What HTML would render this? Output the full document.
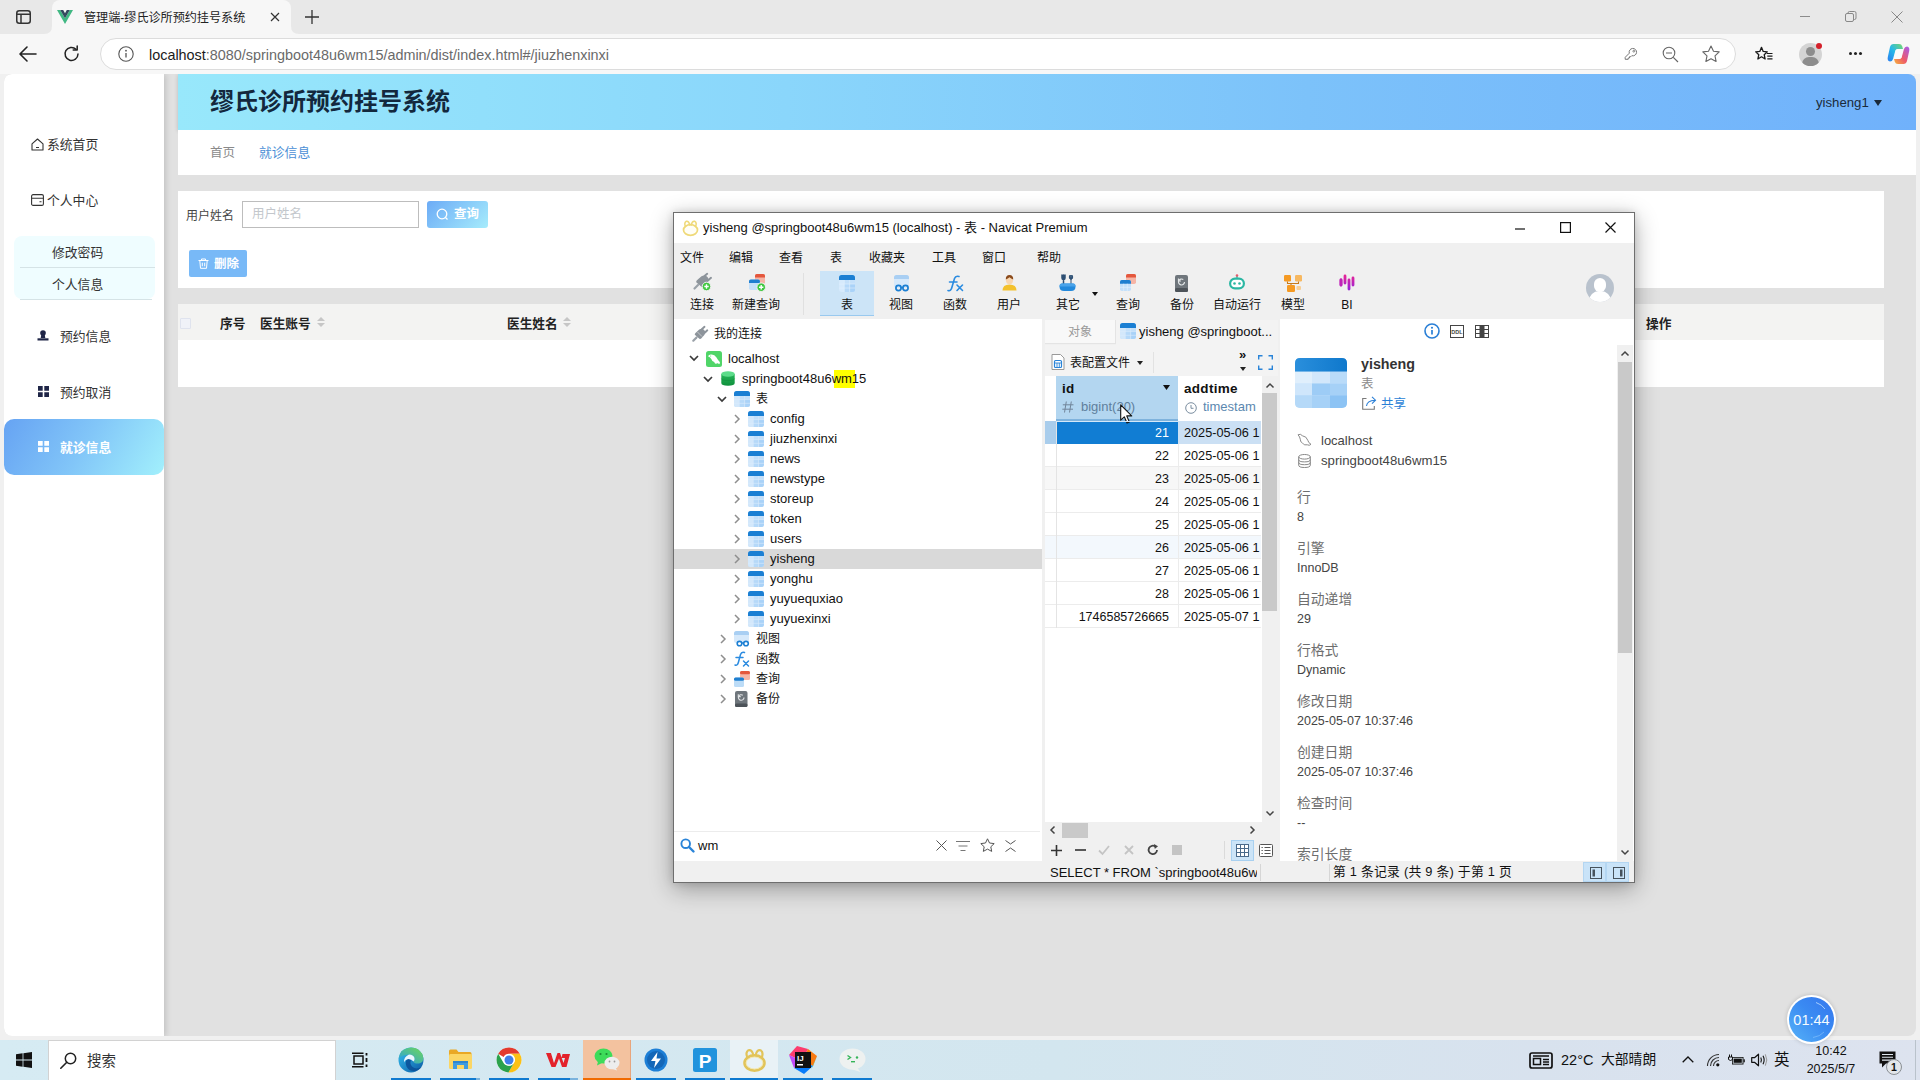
<!DOCTYPE html>
<html lang="zh-CN">
<head>
<meta charset="utf-8">
<title>管理端-缪氏诊所预约挂号系统</title>
<style>
*{box-sizing:border-box;margin:0;padding:0}
html,body{width:1920px;height:1080px;overflow:hidden;background:#f0f0f0;font-family:"Liberation Sans","Noto Sans CJK SC",sans-serif;color:#222}
.abs{position:absolute}
#root{position:relative;width:1920px;height:1080px;overflow:hidden}
svg{display:block;overflow:visible}
.t{position:absolute;white-space:nowrap;line-height:1}
/* ---------- browser chrome ---------- */
#tabbar{left:0;top:0;width:1920px;height:34px;background:#e8e8e8}
#tab{left:52px;top:0;width:239px;height:34px;background:#f7f7f7;border-radius:8px 8px 0 0}
#addr{left:0;top:34px;width:1920px;height:40px;background:#f7f7f7}
#pill{left:100px;top:38px;width:1636px;height:32px;background:#fff;border-radius:16px;border:1px solid #dcdcdc}
/* ---------- page ---------- */
#page{left:4px;top:74px;width:1912px;height:962px;background:#e1e1e1;border-radius:8px;overflow:hidden}
#side{left:0;top:0;width:160px;height:963px;background:#fff;box-shadow:2px 0 6px rgba(0,0,0,.14)}
.mi{font-size:12.8px;color:#333}
#hdr{left:174px;top:0;width:1738px;height:56px;background:linear-gradient(90deg,#98e8fb 0%,#8ad6fb 35%,#7cc2fa 65%,#70b1fb 100%);box-shadow:0 1px 4px rgba(0,0,0,.18)}
#crumb{left:174px;top:56px;width:1738px;height:45px;background:#fff}
#sp{left:174px;top:117px;width:1706px;height:97px;background:#fff}
#tbl{left:174px;top:230px;width:1706px;height:83px;background:#fff}
#th{left:0;top:0;width:1706px;height:36px;background:#f3f3f2}
.th{font-size:12.700px;font-weight:bold;color:#222}
/* ---------- taskbar ---------- */
#task{left:0;top:1040px;width:1920px;height:40px;background:linear-gradient(90deg,#d6ebf3 0%,#d3e6ef 55%,#d8e2ee 80%,#dde3ef 100%)}
.bar{position:absolute;top:38px;height:2px;background:#0f7ad0}
</style>
</head>
<body>
<div id="root">

<!-- ================= BROWSER CHROME ================= -->
<div id="tabbar" class="abs">
  <div id="tab" class="abs"></div>
  <svg class="abs" style="left:44px;top:26px" width="8" height="8" viewBox="0 0 8 8"><path d="M0 8H8V0Q8 8 0 8Z" fill="#f7f7f7"/></svg><svg class="abs" style="left:291px;top:26px" width="8" height="8" viewBox="0 0 8 8"><path d="M8 8H0V0Q0 8 8 8Z" fill="#f7f7f7"/></svg>
  <svg class="abs" style="left:16px;top:10px" width="15" height="14" viewBox="0 0 15 14"><rect x="0.75" y="0.75" width="13.5" height="12.5" rx="2.5" fill="none" stroke="#333" stroke-width="1.5"/><path d="M1 4.200H14M5 4.200V13" stroke="#333" stroke-width="1.500" fill="none"/></svg>
  <svg class="abs" style="left:57px;top:10px" width="16" height="14" viewBox="0 0 16 14"><path d="M0 0H3.2L8 8.3 12.8 0H16L8 14Z" fill="#41b883"/><path d="M3.2 0H6.2L8 3.2 9.8 0H12.8L8 8.3Z" fill="#35495e"/></svg>
  <div class="t" style="left:84px;top:12px;font-size:12.100px;color:#222">管理端-缪氏诊所预约挂号系统</div>
  <svg class="abs" style="left:270px;top:12px" width="10" height="10" viewBox="0 0 10 10"><path d="M1 1L9 9M9 1L1 9" stroke="#333" stroke-width="1.2"/></svg>
  <svg class="abs" style="left:305px;top:10px" width="14" height="14" viewBox="0 0 14 14"><path d="M7 0V14M0 7H14" stroke="#333" stroke-width="1.3"/></svg>
  <svg class="abs" style="left:1800px;top:16px" width="10" height="1" viewBox="0 0 10 1"><path d="M0 .5H10" stroke="#8c8c8c" stroke-width="1"/></svg>
  <svg class="abs" style="left:1845px;top:11px" width="12" height="12" viewBox="0 0 12 12"><rect x="0.5" y="2.5" width="8" height="8" rx="1.5" fill="none" stroke="#888"/><path d="M3 2.5V2Q3 .5 4.5 .5H9.5Q11 .5 11 2V7Q11 8.5 9.5 8.5H9" fill="none" stroke="#888"/></svg>
  <svg class="abs" style="left:1891px;top:11px" width="12" height="12" viewBox="0 0 12 12"><path d="M.5 .5L11.5 11.5M11.5 .5L.5 11.5" stroke="#888" stroke-width="1"/></svg>
</div>
<div id="addr" class="abs"></div>
<div id="pill" class="abs"></div>
<svg class="abs" style="left:19px;top:46px" width="18" height="16" viewBox="0 0 18 16"><path d="M17 8H1.5M8 1L1 8 8 15" fill="none" stroke="#222" stroke-width="1.6" stroke-linecap="round" stroke-linejoin="round"/></svg>
<svg class="abs" style="left:63px;top:45px" width="17" height="17" viewBox="0 0 17 17"><path d="M15 9A6.500 6.500 0 1 1 13 4.200" fill="none" stroke="#222" stroke-width="1.500" stroke-linecap="round"/><path d="M14.200 1V5H10.200" fill="none" stroke="#222" stroke-width="1.5" stroke-linecap="round" stroke-linejoin="round"/></svg>
<svg class="abs" style="left:118px;top:46px" width="16" height="16" viewBox="0 0 16 16"><circle cx="8" cy="8" r="7.2" fill="none" stroke="#555" stroke-width="1.1"/><path d="M8 7V11.5" stroke="#555" stroke-width="1.3"/><circle cx="8" cy="4.7" r=".9" fill="#555"/></svg>
<div class="t" style="left:149px;top:48px;font-size:14.400px;color:#1a1a1a;letter-spacing:0">localhost<span style="color:#6a6a6a">:8080/springboot48u6wm15/admin/dist/index.html#/jiuzhenxinxi</span></div>
<!-- right side address icons -->
<svg class="abs" style="left:1623px;top:46px" width="16" height="16" viewBox="0 0 16 16"><path d="M6.300 7.200A3.700 3.700 0 1 1 8.800 9.700L7.800 10.700H6.500V12H5.200V13.300H2.200V11.300Z" fill="none" stroke="#777" stroke-width="1" stroke-linejoin="round"/><circle cx="10.800" cy="5.200" r=".9" fill="none" stroke="#777" stroke-width=".9"/></svg>
<svg class="abs" style="left:1662px;top:46px" width="17" height="17" viewBox="0 0 17 17"><circle cx="7" cy="7" r="5.8" fill="none" stroke="#666" stroke-width="1.1"/><path d="M4 7H10M11.3 11.3L16 16" stroke="#666" stroke-width="1.2"/></svg>
<svg class="abs" style="left:1702px;top:45px" width="18" height="17" viewBox="0 0 18 17"><path d="M9 1L11.5 6.2 17.2 6.9 13 10.8 14.1 16.4 9 13.7 3.9 16.4 5 10.8.8 6.900 6.500 6.200Z" fill="none" stroke="#666" stroke-width="1.1" stroke-linejoin="round"/></svg>
<svg class="abs" style="left:1755px;top:46px" width="19" height="18" viewBox="0 0 19 18"><path d="M6.500 1.300L8.200 5.400 12.300 5.800 9.200 8.700 10.100 13 6.500 10.800 2.900 13 3.800 8.700.7 5.800 4.800 5.400Z" fill="none" stroke="#1a1a1a" stroke-width="1.300" stroke-linejoin="round"/><path d="M11.800 7.500H17.500M12.300 10.200H17.500M12.300 12.900H17.500" stroke="#1a1a1a" stroke-width="1.200"/></svg>
<div class="abs" style="left:1799px;top:43px;width:23px;height:23px;border-radius:12px;background:#d4d4d4;overflow:hidden"><div class="abs" style="left:7px;top:4px;width:9px;height:9px;border-radius:5px;background:#8d8d8d"></div><div class="abs" style="left:3px;top:14px;width:17px;height:14px;border-radius:8px;background:#8d8d8d"></div></div>
<div class="abs" style="left:1816px;top:43px;width:6px;height:6px;border-radius:3px;background:#d4202a"></div>
<div class="abs" style="left:1849px;top:52px;width:3px;height:3px;border-radius:2px;background:#222;box-shadow:5px 0 0 #222,10px 0 0 #222"></div>
<svg class="abs" style="left:1887px;top:43px" width="23" height="22" viewBox="0 0 23 22"><defs><linearGradient id="cp1" x1="0" y1="1" x2="1" y2="0"><stop offset="0" stop-color="#2a7df0"/><stop offset=".5" stop-color="#27b9e8"/><stop offset="1" stop-color="#7ad86a"/></linearGradient><linearGradient id="cp2" x1="0" y1="1" x2="1" y2="0"><stop offset="0" stop-color="#f5b63a"/><stop offset=".45" stop-color="#ee5a6a"/><stop offset="1" stop-color="#a45cf0"/></linearGradient><linearGradient id="cp3" x1="0" y1="0" x2="1" y2="1"><stop offset="0" stop-color="#e8d44a"/><stop offset="1" stop-color="#f08a3a"/></linearGradient></defs><path d="M6.500 1H12Q14.500 1 15.200 3.300L16 6H10.500Q8.800 6 8.300 7.800L6 16Q5.300 18.500 3 18.500 0 18 .8 14L3 4Q3.800 1 6.500 1Z" fill="url(#cp1)"/><path d="M16.500 21H11Q8.500 21 7.800 18.700L7 16H12.500Q14.200 16 14.700 14.200L17 6Q17.700 3.500 20 3.500 23 4 22.200 8L20 18Q19.200 21 16.500 21Z" fill="url(#cp2)"/><path d="M10.500 6H16L14.700 14.200Q14.200 16 12.500 16H7L8.300 7.800Q8.800 6 10.500 6Z" fill="#fff" opacity=".55"/></svg>

<!-- ================= PAGE ================= -->
<div id="page" class="abs">
  <div id="hdr" class="abs">
    <div class="t" style="left:32px;top:16px;font-size:24px;font-weight:bold;color:#13283d">缪氏诊所预约挂号系统</div>
    <div class="t" style="left:1638px;top:22px;font-size:13.2px;color:#1a2a3a">yisheng1</div>
    <svg class="abs" style="left:1696px;top:26px" width="8" height="6" viewBox="0 0 8 6"><path d="M0 0H8L4 6Z" fill="#1a2a3a"/></svg>
  </div>
  <div id="crumb" class="abs">
    <div class="t" style="left:32px;top:17px;font-size:12.5px;color:#8a8a8a">首页</div>
    <div class="t" style="left:81px;top:17px;font-size:12.800px;color:#4b8fd6">就诊信息</div>
  </div>
  <div id="sp" class="abs">
    <div class="t" style="left:8px;top:19px;font-size:12px;color:#454545">用户姓名</div>
    <div class="abs" style="left:64px;top:10px;width:177px;height:27px;border:1px solid #bdbdbd;background:#fff"></div>
    <div class="t" style="left:74px;top:17px;font-size:12.500px;color:#c3c7cc">用户姓名</div>
    <div class="abs" style="left:249px;top:10px;width:61px;height:27px;border-radius:3px;background:linear-gradient(135deg,#6cabf6,#a6ecfc)"></div>
    <svg class="abs" style="left:258px;top:17px" width="13" height="13" viewBox="0 0 13 13"><circle cx="6" cy="6" r="4.800" fill="none" stroke="#fff" stroke-width="1.300"/><path d="M9.500 9.500L11.500 11.500" stroke="#fff" stroke-width="1.300"/></svg>
    <div class="t" style="left:276px;top:17px;font-size:12.500px;font-weight:bold;color:#fff">查询</div>
    <div class="abs" style="left:11px;top:59px;width:58px;height:27px;border-radius:2px;background:#78b9f7"></div>
    <svg class="abs" style="left:20px;top:67px" width="11" height="11" viewBox="0 0 11 11"><path d="M.5 2.500H10.500M3.500 2.500V1H7.500V2.500M1.800 2.500L2.500 10.300H8.500L9.200 2.500M4.300 4.700V8.300M6.700 4.700V8.300" fill="none" stroke="#fff" stroke-width="1"/></svg>
    <div class="t" style="left:36px;top:67px;font-size:12.500px;font-weight:bold;color:#fff">删除</div>
  </div>
  <div id="tbl" class="abs">
    <div id="th" class="abs"></div>
    <div class="abs" style="left:2px;top:14px;width:11px;height:11px;border:1px solid #dfe3ee;background:#f0f2f8;border-radius:1px"></div>
    <div class="t th" style="left:42px;top:14px">序号</div>
    <div class="t th" style="left:82px;top:14px">医生账号</div>
    <svg class="abs" style="left:139px;top:13px" width="8" height="10" viewBox="0 0 8 10"><path d="M0 4L4 0 8 4Z" fill="#c6c6c6"/><path d="M0 6L4 10 8 6Z" fill="#c6c6c6"/></svg>
    <div class="t th" style="left:329px;top:14px">医生姓名</div>
    <svg class="abs" style="left:385px;top:13px" width="8" height="10" viewBox="0 0 8 10"><path d="M0 4L4 0 8 4Z" fill="#c6c6c6"/><path d="M0 6L4 10 8 6Z" fill="#c6c6c6"/></svg>
    <div class="t th" style="left:1468px;top:14px">操作</div>
  </div>
  <!-- sidebar -->
  <div id="side" class="abs">
    <svg class="abs" style="left:27px;top:64px" width="13" height="13" viewBox="0 0 13 13"><path d="M1 5.800L6.500 1 12 5.800V12H1Z" fill="none" stroke="#333" stroke-width="1.100" stroke-linejoin="round"/><path d="M5 9.500H8" stroke="#333" stroke-width="1.100"/></svg>
    <div class="t mi" style="left:43px;top:65px">系统首页</div>
    <svg class="abs" style="left:27px;top:120px" width="13" height="12" viewBox="0 0 13 12"><rect x=".6" y=".6" width="11.800" height="10.800" rx="1.500" fill="none" stroke="#333" stroke-width="1.100"/><path d="M.6 4.200H12.400M8.500 7.800H10.500" stroke="#333" stroke-width="1.100"/></svg>
    <div class="t mi" style="left:43px;top:121px">个人中心</div>
    <div class="abs" style="left:10px;top:162px;width:141px;height:63px;background:#effdff;border-radius:8px"></div>
    <div class="abs" style="left:16px;top:193px;width:135px;height:1px;background:#d5e3e6"></div>
    <div class="abs" style="left:16px;top:225px;width:132px;height:1px;background:#d5e3e6"></div>
    <div class="t mi" style="left:48px;top:173px">修改密码</div>
    <div class="t mi" style="left:48px;top:205px">个人信息</div>
    <svg class="abs" style="left:33px;top:256px" width="12" height="11" viewBox="0 0 12 11"><circle cx="6" cy="3" r="2.800" fill="#1f2547"/><path d="M4.300 4.500H7.700L8.300 8H3.700Z" fill="#1f2547"/><rect x=".5" y="8.300" width="11" height="2.200" fill="#1f2547"/></svg>
    <div class="t mi" style="left:56px;top:257px">预约信息</div>
    <svg class="abs" style="left:34px;top:312px" width="11" height="11" viewBox="0 0 11 11"><path d="M0 0H4.700V4.700H0ZM6.300 0H11V4.700H6.300ZM0 6.300H4.700V11H0ZM6.300 6.300H11V11H6.300Z" fill="#1f2547"/></svg>
    <div class="t mi" style="left:56px;top:313px">预约取消</div>
    <div class="abs" style="left:0;top:345px;width:160px;height:56px;border-radius:10px;background:linear-gradient(120deg,#66a3f3 0%,#82c6f8 50%,#a2f0fc 100%)"></div>
    <svg class="abs" style="left:34px;top:367px" width="11" height="11" viewBox="0 0 11 11"><path d="M0 0H4.700V4.700H0ZM6.300 0H11V4.700H6.300ZM0 6.300H4.700V11H0ZM6.300 6.300H11V11H6.300Z" fill="#fff"/></svg>
    <div class="t mi" style="left:56px;top:368px;color:#fff;font-weight:bold">就诊信息</div>
  </div>
</div>

<!-- ================= NAVICAT WINDOW ================= -->
<style>
#nv{left:673px;top:212px;width:962px;height:671px;background:#f0f0f0;border:1px solid #6e6e6e;box-shadow:0 6px 22px rgba(0,0,0,.32),0 0 8px rgba(0,0,0,.12);font-family:"Liberation Sans","Noto Sans CJK SC",sans-serif;color:#111}
#nv .t{font-size:13px;color:#111}
#nvtitle{left:0;top:0;width:960px;height:30px;background:#fff}
.mn{font-size:12px !important}
.tl{font-size:12px !important;text-align:center;width:70px}
.tr{font-size:13px !important}
.chev{position:absolute}
</style>
<div id="nv" class="abs">
  <div id="nvtitle" class="abs"></div>
  <!-- app icon -->
  <svg class="abs" style="left:8px;top:7px" width="17" height="16" viewBox="0 0 17 16"><ellipse cx="8.500" cy="10" rx="7" ry="5.300" fill="#fffef6" stroke="#efd978" stroke-width="1.700"/><path d="M3.500 6.500Q1.800 2.800 4.200 1.300 6.800 .7 7.800 5" fill="none" stroke="#efd978" stroke-width="1.500" stroke-linecap="round"/><path d="M13.500 6.500Q15.200 2.800 12.800 1.300 10.200 .7 9.200 5" fill="none" stroke="#efd978" stroke-width="1.500" stroke-linecap="round"/></svg>
  <div class="t" style="left:29px;top:8px;font-size:13px">yisheng @springboot48u6wm15 (localhost) - 表 - Navicat Premium</div>
  <svg class="abs" style="left:841px;top:15px" width="10" height="2" viewBox="0 0 10 2"><path d="M0 1H10" stroke="#111" stroke-width="1.200"/></svg>
  <svg class="abs" style="left:886px;top:9px" width="11" height="11" viewBox="0 0 11 11"><rect x=".6" y=".6" width="9.800" height="9.800" fill="none" stroke="#111" stroke-width="1.200"/></svg>
  <svg class="abs" style="left:931px;top:9px" width="11" height="11" viewBox="0 0 11 11"><path d="M.5 .5L10.500 10.500M10.500 .5L.5 10.500" stroke="#111" stroke-width="1.200"/></svg>
  <!-- menu -->
  <div class="t mn" style="left:6px;top:39px">文件</div>
  <div class="t mn" style="left:55px;top:39px">编辑</div>
  <div class="t mn" style="left:105px;top:39px">查看</div>
  <div class="t mn" style="left:156px;top:39px">表</div>
  <div class="t mn" style="left:195px;top:39px">收藏夹</div>
  <div class="t mn" style="left:258px;top:39px">工具</div>
  <div class="t mn" style="left:308px;top:39px">窗口</div>
  <div class="t mn" style="left:363px;top:39px">帮助</div>
  <!-- toolbar -->
  <div class="abs" style="left:146px;top:58px;width:54px;height:45px;background:#cce4f7;border-bottom:1px solid #99c9ef"></div>
  <div class="abs" style="left:129px;top:60px;width:1px;height:42px;background:#e0e0e0"></div>
  <div class="t tl" style="left:-7px;top:86px">连接</div>
  <div class="t tl" style="left:47px;top:86px">新建查询</div>
  <div class="t tl" style="left:138px;top:86px">表</div>
  <div class="t tl" style="left:192px;top:86px">视图</div>
  <div class="t tl" style="left:246px;top:86px">函数</div>
  <div class="t tl" style="left:300px;top:86px">用户</div>
  <div class="t tl" style="left:359px;top:86px">其它</div>
  <div class="t tl" style="left:419px;top:86px">查询</div>
  <div class="t tl" style="left:473px;top:86px">备份</div>
  <div class="t tl" style="left:528px;top:86px">自动运行</div>
  <div class="t tl" style="left:584px;top:86px">模型</div>
  <div class="t tl" style="left:638px;top:86px">BI</div>
  <svg class="abs" style="left:418px;top:79px" width="6" height="4" viewBox="0 0 6 4"><path d="M0 0H6L3 4Z" fill="#111"/></svg>
  <!-- toolbar icons -->
  <!-- connect -->
  <svg class="abs" style="left:19px;top:60px" width="19" height="19" viewBox="0 0 19 19"><path d="M1.500 15.500L5 12" stroke="#9aa1a8" stroke-width="2.200" stroke-linecap="round"/><path d="M3.200 9.200Q3 8 4.200 7L8.500 3.200Q12 1.500 14.500 4 16.800 7 14.500 10L11 14Q10 15 9 14.200Z" fill="#8d949b"/><path d="M11.500 3L14.200 .8M15.500 7L18 4.800" stroke="#8d949b" stroke-width="2" stroke-linecap="round"/><circle cx="13.500" cy="13.500" r="4.300" fill="#3fc83f" stroke="#f0f0f0" stroke-width="1"/><path d="M13.500 11.300V15.700M11.300 13.500H15.700" stroke="#fff" stroke-width="1.400"/></svg>
  <!-- new query -->
  <svg class="abs" style="left:74px;top:61px" width="19" height="18" viewBox="0 0 19 18"><rect x="7" y="0" width="10" height="10" rx="1.800" fill="#f6b5a6"/><path d="M7 1.800Q7 0 8.800 0H15.200Q17 0 17 1.800V3.500H7Z" fill="#e4573d"/><rect x="1" y="5.500" width="11" height="10.500" rx="1.800" fill="#c4e0fa"/><path d="M1 7.300Q1 5.500 2.800 5.500H10.200Q12 5.500 12 7.300V9H1Z" fill="#1f7fd0"/><circle cx="13.200" cy="13.200" r="4.300" fill="#3fc83f" stroke="#f0f0f0" stroke-width="1"/><path d="M13.200 11V15.400M11 13.200H15.400" stroke="#fff" stroke-width="1.400"/></svg>
  <!-- table -->
  <svg class="abs" style="left:165px;top:62px" width="16" height="17" viewBox="0 0 16 17"><rect x="0" y="0" width="16" height="17" rx="2.500" fill="#c4e0fa"/><path d="M0 5H5.300V17H2.500Q0 17 0 14.500Z" fill="#d6eafc"/><path d="M10.700 9H16V14.500Q16 17 13.500 17H10.700Z" fill="#a9d2f8"/><rect x="5.300" y="9" width="5.400" height="8" fill="#b6d9f9"/><path d="M0 2.500Q0 0 2.500 0H13.500Q16 0 16 2.500V5H0Z" fill="#1b7fd3"/><path d="M5.300 5V17M10.700 5V17M0 9H16M0 13H16" stroke="#e3f0fd" stroke-width=".6"/></svg>
  <!-- view -->
  <svg class="abs" style="left:219px;top:62px" width="17" height="18" viewBox="0 0 17 18"><rect x="1" y="0" width="15" height="13" rx="2.500" fill="#d6e9fb"/><path d="M1 2.500Q1 0 3.500 0H13.500Q16 0 16 2.500V4H1Z" fill="#a9cff3"/><circle cx="5.500" cy="13" r="2.600" fill="none" stroke="#1b7fd3" stroke-width="1.700"/><circle cx="12.500" cy="13" r="2.600" fill="none" stroke="#1b7fd3" stroke-width="1.700"/><path d="M8 12.500H10" stroke="#1b7fd3" stroke-width="1.500"/></svg>
  <!-- function -->
  <svg class="abs" style="left:273px;top:62px" width="17" height="18" viewBox="0 0 17 18"><path d="M1 15.500Q4 16.500 5 12L7.500 3.500Q8.500 0.500 12 1.500M2.500 7H10" fill="none" stroke="#2b8be0" stroke-width="1.600" stroke-linecap="round"/><path d="M10 10L15.500 15.500M15.500 10L10 15.500" stroke="#2b8be0" stroke-width="1.600" stroke-linecap="round"/></svg>
  <!-- user -->
  <svg class="abs" style="left:328px;top:61px" width="15" height="17" viewBox="0 0 15 17"><path d="M.5 16.500Q.5 10.500 7.500 10.500 14.500 10.500 14.500 16.500Z" fill="#f3c12c"/><ellipse cx="7.500" cy="6" rx="3.600" ry="4.200" fill="#f8d6b0"/><path d="M3.800 5.500Q3.600 1 7.500 1 11.400 1 11.200 5.500 9 4.800 7.500 3.200 6 4.800 3.800 5.500Z" fill="#8a4a1c"/></svg>
  <!-- others -->
  <svg class="abs" style="left:385px;top:61px" width="17" height="18" viewBox="0 0 17 18"><path d="M4.500 10V5.500M3 1V4Q3 5.500 4.500 5.500 6 5.500 6 4V1M4.500 1V4" fill="none" stroke="#2d4f73" stroke-width="1.500" stroke-linecap="round"/><path d="M12 10V5.500Q10.200 5 10.300 3 10.500 1.500 11.300 1V3.300H12.700V1Q13.500 1.500 13.700 3 13.800 5 12 5.500" fill="#2d4f73" stroke="#2d4f73" stroke-width="1" stroke-linejoin="round"/><path d="M.5 12.500Q.5 9.500 3 9.500H14Q16.500 9.500 16.500 12.500 16.500 17 12 17H5Q.5 17 .5 12.500Z" fill="#2389dc"/><path d="M.5 12.500Q.5 9.500 3 9.500H14Q16.500 9.500 16.500 12.500Z" fill="#4aa3ea"/></svg>
  <!-- query -->
  <svg class="abs" style="left:445px;top:61px" width="18" height="18" viewBox="0 0 18 18"><rect x="7" y="0" width="10" height="10" rx="1.800" fill="#f6b5a6"/><path d="M7 1.800Q7 0 8.800 0H15.200Q17 0 17 1.800V3.500H7Z" fill="#e4573d"/><rect x="1" y="6" width="11" height="11" rx="1.800" fill="#c4e0fa"/><path d="M1 7.800Q1 6 2.800 6H10.200Q12 6 12 7.800V9.700H1Z" fill="#1f7fd0"/><path d="M4.700 9.700V17M8.300 9.700V17M1 13.300H12" stroke="#e6f1fd" stroke-width=".6"/></svg>
  <!-- backup -->
  <svg class="abs" style="left:500px;top:62px" width="15" height="18" viewBox="0 0 15 18"><rect x="1" y="0" width="13" height="17" rx="2" fill="#6f767c"/><rect x="1" y="13" width="13" height="4" rx="1.500" fill="#4d5359"/><path d="M10.500 7A3 3 0 1 1 9.300 4.600" fill="none" stroke="#e3e6e8" stroke-width="1.200"/><path d="M4.500 3.500V6H7" fill="none" stroke="#e3e6e8" stroke-width="1.200"/></svg>
  <!-- automation -->
  <svg class="abs" style="left:555px;top:61px" width="16" height="17" viewBox="0 0 16 17"><path d="M8 1.500V5" stroke="#27b8a6" stroke-width="1.300"/><circle cx="8" cy="1.500" r="1.300" fill="#e45a6a"/><rect x="1.100" y="4.600" width="13.800" height="9.800" rx="4.900" fill="#fff" stroke="#2bb7a3" stroke-width="2.200"/><circle cx="5.500" cy="9.500" r="1.300" fill="#2bb7a3"/><circle cx="10.500" cy="9.500" r="1.300" fill="#2bb7a3"/></svg>
  <!-- model -->
  <svg class="abs" style="left:610px;top:62px" width="18" height="17" viewBox="0 0 18 17"><rect x="0" y="0" width="7" height="6.500" rx="1.200" fill="#f59a23"/><rect x="11" y="0" width="7" height="6.500" rx="1.200" fill="#f7b860"/><rect x="3" y="10" width="8" height="7" rx="1.200" fill="#f59a23"/><path d="M3.500 6.500V8.500H14.500V6.500M7 8.500V10" fill="none" stroke="#c77a1a" stroke-width="1.100"/><rect x="12.500" y="11" width="4.500" height="4" rx="1" fill="#f7cf96"/></svg>
  <!-- BI -->
  <svg class="abs" style="left:665px;top:61px" width="16" height="17" viewBox="0 0 16 17"><defs><linearGradient id="big" x1="0" y1="0" x2="0" y2="1"><stop offset="0" stop-color="#e3249a"/><stop offset="1" stop-color="#9a22d6"/></linearGradient></defs><path d="M2 6V11M6 2V9M10 6V15M14 4V11" stroke="url(#big)" stroke-width="2.800" stroke-linecap="round"/><path d="M2 6V11" stroke="#c022b8" stroke-width="2.800" stroke-linecap="round"/></svg>
  <!-- avatar -->
  <div class="abs" style="left:912px;top:61px;width:28px;height:28px;border-radius:14px;background:#b9c2cd;overflow:hidden"><div class="abs" style="left:8px;top:4px;width:12px;height:14px;border-radius:6px;background:#fff"></div><div class="abs" style="left:3px;top:17px;width:22px;height:18px;border-radius:10px 10px 0 0;background:#fff"></div></div>
<div class="abs" style="left:0;top:106px;width:368px;height:542px;background:#fff"></div>
<div class="abs" style="left:0;top:336px;width:368px;height:20px;background:#d9d9d9"></div>
<svg class="abs" style="left:18px;top:113px" width="16" height="16" viewBox="0 0 16 16"><path d="M1.300 14.700L4.500 11.500" stroke="#9aa1a8" stroke-width="2.200" stroke-linecap="round"/><path d="M2.800 8.800Q2.500 7.800 3.500 6.900L7.200 3.500Q10 2 12.200 4 14.200 6.500 12.300 9L9.200 12.500Q8.300 13.300 7.400 12.700Z" fill="#8d949b"/><path d="M9.800 3.200L12.500 .8M13 6.500L15.300 4.300" stroke="#8d949b" stroke-width="1.900" stroke-linecap="round"/><path d="M5.500 6L10 10.500" stroke="#fff" stroke-width=".8" opacity=".6"/></svg>
<div class="t tr" style="left:40px;top:115px;font-size:12px !important">我的连接</div>
<svg class="abs" style="left:15px;top:142px" width="10" height="6" viewBox="0 0 10 6"><path d="M1 1L5 5 9 1" fill="none" stroke="#3a3a3a" stroke-width="1.700"/></svg>
<svg class="abs" style="left:32px;top:138px" width="16" height="16" viewBox="0 0 16 16"><rect width="16" height="16" rx="2.500" fill="#50d568"/><path d="M2 5.200Q3 3.200 5.300 3.500 8.500 3.300 10.500 6.500 11.800 9 13.800 11 14.500 12.300 13 13.300 12.500 12 11 12.200 9 13.800 8.200 11 6 10.500 5.300 8 4.500 6.300 2 5.200Z" fill="#fff"/><circle cx="4.700" cy="5" r=".5" fill="#50d568"/></svg>
<div class="t tr" style="left:54px;top:139px">localhost</div>
<svg class="abs" style="left:29px;top:163px" width="10" height="6" viewBox="0 0 10 6"><path d="M1 1L5 5 9 1" fill="none" stroke="#3a3a3a" stroke-width="1.700"/></svg>
<svg class="abs" style="left:47px;top:158px" width="14" height="15" viewBox="0 0 14 15"><defs><linearGradient id="dbg" x1="0" y1="0" x2="0" y2="1"><stop offset="0" stop-color="#27b75a"/><stop offset="1" stop-color="#0f8f3b"/></linearGradient></defs><path d="M.3 3V12Q.3 14.800 7 14.800 13.700 14.800 13.700 12V3Z" fill="url(#dbg)"/><path d="M.3 7.300Q.3 9.600 7 9.600 13.700 9.600 13.700 7.300" fill="none" stroke="#0d7d33" stroke-width=".5" opacity=".6"/><ellipse cx="7" cy="3" rx="6.700" ry="2.700" fill="#5ddc8a"/></svg>
<div class="abs" style="left:160px;top:157px;width:21px;height:18px;background:#ffff00"></div>
<div class="t tr" style="left:68px;top:159px">springboot48u6wm15</div>
<svg class="abs" style="left:43px;top:183px" width="10" height="6" viewBox="0 0 10 6"><path d="M1 1L5 5 9 1" fill="none" stroke="#3a3a3a" stroke-width="1.700"/></svg>
<svg class="abs" style="left:60px;top:178px" width="16" height="16" viewBox="0 0 16 16"><rect x="0" y="0" width="16" height="16" rx="2.500" fill="#c4e0fa"/><path d="M0 5H5.300V16H2.500Q0 16 0 13.500Z" fill="#d3e8fb"/><path d="M10.700 8.500H16V13.500Q16 16 13.500 16H10.700Z" fill="#a9d2f8"/><rect x="5.300" y="8.500" width="5.400" height="7.500" fill="#b6d9f9"/><path d="M0 2.500Q0 0 2.500 0H13.500Q16 0 16 2.500V5H0Z" fill="#1b7fd3"/><path d="M0 8.600H16M0 12.300H16M5.300 5V16M10.700 5V16" stroke="#dcedfc" stroke-width=".6"/></svg>
<div class="t tr" style="left:82px;top:180px;font-size:12px !important">表</div>
<svg class="abs" style="left:60px;top:201px" width="6" height="10" viewBox="0 0 6 10"><path d="M1 1L5 5 1 9" fill="none" stroke="#8e8e8e" stroke-width="1.500"/></svg>
<svg class="abs" style="left:74px;top:198px" width="16" height="16" viewBox="0 0 16 16"><rect x="0" y="0" width="16" height="16" rx="2.500" fill="#c4e0fa"/><path d="M0 5H5.300V16H2.500Q0 16 0 13.500Z" fill="#d3e8fb"/><path d="M10.700 8.500H16V13.500Q16 16 13.500 16H10.700Z" fill="#a9d2f8"/><rect x="5.300" y="8.500" width="5.400" height="7.500" fill="#b6d9f9"/><path d="M0 2.500Q0 0 2.500 0H13.500Q16 0 16 2.500V5H0Z" fill="#1b7fd3"/><path d="M0 8.600H16M0 12.300H16M5.300 5V16M10.700 5V16" stroke="#dcedfc" stroke-width=".6"/></svg>
<div class="t tr" style="left:96px;top:199px">config</div>
<svg class="abs" style="left:60px;top:221px" width="6" height="10" viewBox="0 0 6 10"><path d="M1 1L5 5 1 9" fill="none" stroke="#8e8e8e" stroke-width="1.500"/></svg>
<svg class="abs" style="left:74px;top:218px" width="16" height="16" viewBox="0 0 16 16"><rect x="0" y="0" width="16" height="16" rx="2.500" fill="#c4e0fa"/><path d="M0 5H5.300V16H2.500Q0 16 0 13.500Z" fill="#d3e8fb"/><path d="M10.700 8.500H16V13.500Q16 16 13.500 16H10.700Z" fill="#a9d2f8"/><rect x="5.300" y="8.500" width="5.400" height="7.500" fill="#b6d9f9"/><path d="M0 2.500Q0 0 2.500 0H13.500Q16 0 16 2.500V5H0Z" fill="#1b7fd3"/><path d="M0 8.600H16M0 12.300H16M5.300 5V16M10.700 5V16" stroke="#dcedfc" stroke-width=".6"/></svg>
<div class="t tr" style="left:96px;top:219px">jiuzhenxinxi</div>
<svg class="abs" style="left:60px;top:241px" width="6" height="10" viewBox="0 0 6 10"><path d="M1 1L5 5 1 9" fill="none" stroke="#8e8e8e" stroke-width="1.500"/></svg>
<svg class="abs" style="left:74px;top:238px" width="16" height="16" viewBox="0 0 16 16"><rect x="0" y="0" width="16" height="16" rx="2.500" fill="#c4e0fa"/><path d="M0 5H5.300V16H2.500Q0 16 0 13.500Z" fill="#d3e8fb"/><path d="M10.700 8.500H16V13.500Q16 16 13.500 16H10.700Z" fill="#a9d2f8"/><rect x="5.300" y="8.500" width="5.400" height="7.500" fill="#b6d9f9"/><path d="M0 2.500Q0 0 2.500 0H13.500Q16 0 16 2.500V5H0Z" fill="#1b7fd3"/><path d="M0 8.600H16M0 12.300H16M5.300 5V16M10.700 5V16" stroke="#dcedfc" stroke-width=".6"/></svg>
<div class="t tr" style="left:96px;top:239px">news</div>
<svg class="abs" style="left:60px;top:261px" width="6" height="10" viewBox="0 0 6 10"><path d="M1 1L5 5 1 9" fill="none" stroke="#8e8e8e" stroke-width="1.500"/></svg>
<svg class="abs" style="left:74px;top:258px" width="16" height="16" viewBox="0 0 16 16"><rect x="0" y="0" width="16" height="16" rx="2.500" fill="#c4e0fa"/><path d="M0 5H5.300V16H2.500Q0 16 0 13.500Z" fill="#d3e8fb"/><path d="M10.700 8.500H16V13.500Q16 16 13.500 16H10.700Z" fill="#a9d2f8"/><rect x="5.300" y="8.500" width="5.400" height="7.500" fill="#b6d9f9"/><path d="M0 2.500Q0 0 2.500 0H13.500Q16 0 16 2.500V5H0Z" fill="#1b7fd3"/><path d="M0 8.600H16M0 12.300H16M5.300 5V16M10.700 5V16" stroke="#dcedfc" stroke-width=".6"/></svg>
<div class="t tr" style="left:96px;top:259px">newstype</div>
<svg class="abs" style="left:60px;top:281px" width="6" height="10" viewBox="0 0 6 10"><path d="M1 1L5 5 1 9" fill="none" stroke="#8e8e8e" stroke-width="1.500"/></svg>
<svg class="abs" style="left:74px;top:278px" width="16" height="16" viewBox="0 0 16 16"><rect x="0" y="0" width="16" height="16" rx="2.500" fill="#c4e0fa"/><path d="M0 5H5.300V16H2.500Q0 16 0 13.500Z" fill="#d3e8fb"/><path d="M10.700 8.500H16V13.500Q16 16 13.500 16H10.700Z" fill="#a9d2f8"/><rect x="5.300" y="8.500" width="5.400" height="7.500" fill="#b6d9f9"/><path d="M0 2.500Q0 0 2.500 0H13.500Q16 0 16 2.500V5H0Z" fill="#1b7fd3"/><path d="M0 8.600H16M0 12.300H16M5.300 5V16M10.700 5V16" stroke="#dcedfc" stroke-width=".6"/></svg>
<div class="t tr" style="left:96px;top:279px">storeup</div>
<svg class="abs" style="left:60px;top:301px" width="6" height="10" viewBox="0 0 6 10"><path d="M1 1L5 5 1 9" fill="none" stroke="#8e8e8e" stroke-width="1.500"/></svg>
<svg class="abs" style="left:74px;top:298px" width="16" height="16" viewBox="0 0 16 16"><rect x="0" y="0" width="16" height="16" rx="2.500" fill="#c4e0fa"/><path d="M0 5H5.300V16H2.500Q0 16 0 13.500Z" fill="#d3e8fb"/><path d="M10.700 8.500H16V13.500Q16 16 13.500 16H10.700Z" fill="#a9d2f8"/><rect x="5.300" y="8.500" width="5.400" height="7.500" fill="#b6d9f9"/><path d="M0 2.500Q0 0 2.500 0H13.500Q16 0 16 2.500V5H0Z" fill="#1b7fd3"/><path d="M0 8.600H16M0 12.300H16M5.300 5V16M10.700 5V16" stroke="#dcedfc" stroke-width=".6"/></svg>
<div class="t tr" style="left:96px;top:299px">token</div>
<svg class="abs" style="left:60px;top:321px" width="6" height="10" viewBox="0 0 6 10"><path d="M1 1L5 5 1 9" fill="none" stroke="#8e8e8e" stroke-width="1.500"/></svg>
<svg class="abs" style="left:74px;top:318px" width="16" height="16" viewBox="0 0 16 16"><rect x="0" y="0" width="16" height="16" rx="2.500" fill="#c4e0fa"/><path d="M0 5H5.300V16H2.500Q0 16 0 13.500Z" fill="#d3e8fb"/><path d="M10.700 8.500H16V13.500Q16 16 13.500 16H10.700Z" fill="#a9d2f8"/><rect x="5.300" y="8.500" width="5.400" height="7.500" fill="#b6d9f9"/><path d="M0 2.500Q0 0 2.500 0H13.500Q16 0 16 2.500V5H0Z" fill="#1b7fd3"/><path d="M0 8.600H16M0 12.300H16M5.300 5V16M10.700 5V16" stroke="#dcedfc" stroke-width=".6"/></svg>
<div class="t tr" style="left:96px;top:319px">users</div>
<svg class="abs" style="left:60px;top:341px" width="6" height="10" viewBox="0 0 6 10"><path d="M1 1L5 5 1 9" fill="none" stroke="#8e8e8e" stroke-width="1.500"/></svg>
<svg class="abs" style="left:74px;top:338px" width="16" height="16" viewBox="0 0 16 16"><rect x="0" y="0" width="16" height="16" rx="2.500" fill="#c4e0fa"/><path d="M0 5H5.300V16H2.500Q0 16 0 13.500Z" fill="#d3e8fb"/><path d="M10.700 8.500H16V13.500Q16 16 13.500 16H10.700Z" fill="#a9d2f8"/><rect x="5.300" y="8.500" width="5.400" height="7.500" fill="#b6d9f9"/><path d="M0 2.500Q0 0 2.500 0H13.500Q16 0 16 2.500V5H0Z" fill="#1b7fd3"/><path d="M0 8.600H16M0 12.300H16M5.300 5V16M10.700 5V16" stroke="#dcedfc" stroke-width=".6"/></svg>
<div class="t tr" style="left:96px;top:339px">yisheng</div>
<svg class="abs" style="left:60px;top:361px" width="6" height="10" viewBox="0 0 6 10"><path d="M1 1L5 5 1 9" fill="none" stroke="#8e8e8e" stroke-width="1.500"/></svg>
<svg class="abs" style="left:74px;top:358px" width="16" height="16" viewBox="0 0 16 16"><rect x="0" y="0" width="16" height="16" rx="2.500" fill="#c4e0fa"/><path d="M0 5H5.300V16H2.500Q0 16 0 13.500Z" fill="#d3e8fb"/><path d="M10.700 8.500H16V13.500Q16 16 13.500 16H10.700Z" fill="#a9d2f8"/><rect x="5.300" y="8.500" width="5.400" height="7.500" fill="#b6d9f9"/><path d="M0 2.500Q0 0 2.500 0H13.500Q16 0 16 2.500V5H0Z" fill="#1b7fd3"/><path d="M0 8.600H16M0 12.300H16M5.300 5V16M10.700 5V16" stroke="#dcedfc" stroke-width=".6"/></svg>
<div class="t tr" style="left:96px;top:359px">yonghu</div>
<svg class="abs" style="left:60px;top:381px" width="6" height="10" viewBox="0 0 6 10"><path d="M1 1L5 5 1 9" fill="none" stroke="#8e8e8e" stroke-width="1.500"/></svg>
<svg class="abs" style="left:74px;top:378px" width="16" height="16" viewBox="0 0 16 16"><rect x="0" y="0" width="16" height="16" rx="2.500" fill="#c4e0fa"/><path d="M0 5H5.300V16H2.500Q0 16 0 13.500Z" fill="#d3e8fb"/><path d="M10.700 8.500H16V13.500Q16 16 13.500 16H10.700Z" fill="#a9d2f8"/><rect x="5.300" y="8.500" width="5.400" height="7.500" fill="#b6d9f9"/><path d="M0 2.500Q0 0 2.500 0H13.500Q16 0 16 2.500V5H0Z" fill="#1b7fd3"/><path d="M0 8.600H16M0 12.300H16M5.300 5V16M10.700 5V16" stroke="#dcedfc" stroke-width=".6"/></svg>
<div class="t tr" style="left:96px;top:379px">yuyuequxiao</div>
<svg class="abs" style="left:60px;top:401px" width="6" height="10" viewBox="0 0 6 10"><path d="M1 1L5 5 1 9" fill="none" stroke="#8e8e8e" stroke-width="1.500"/></svg>
<svg class="abs" style="left:74px;top:398px" width="16" height="16" viewBox="0 0 16 16"><rect x="0" y="0" width="16" height="16" rx="2.500" fill="#c4e0fa"/><path d="M0 5H5.300V16H2.500Q0 16 0 13.500Z" fill="#d3e8fb"/><path d="M10.700 8.500H16V13.500Q16 16 13.500 16H10.700Z" fill="#a9d2f8"/><rect x="5.300" y="8.500" width="5.400" height="7.500" fill="#b6d9f9"/><path d="M0 2.500Q0 0 2.500 0H13.500Q16 0 16 2.500V5H0Z" fill="#1b7fd3"/><path d="M0 8.600H16M0 12.300H16M5.300 5V16M10.700 5V16" stroke="#dcedfc" stroke-width=".6"/></svg>
<div class="t tr" style="left:96px;top:399px">yuyuexinxi</div>
<svg class="abs" style="left:46px;top:421px" width="6" height="10" viewBox="0 0 6 10"><path d="M1 1L5 5 1 9" fill="none" stroke="#8e8e8e" stroke-width="1.500"/></svg>
<svg class="abs" style="left:60px;top:418px" width="16" height="17" viewBox="0 0 16 17"><rect x="0" y="0" width="15" height="12" rx="2.500" fill="#d6e9fb"/><path d="M0 2.500Q0 0 2.500 0H12.500Q15 0 15 2.500V4H0Z" fill="#a9cff3"/><circle cx="5.500" cy="12.500" r="2.300" fill="none" stroke="#1b7fd3" stroke-width="1.600"/><circle cx="12" cy="12.500" r="2.300" fill="none" stroke="#1b7fd3" stroke-width="1.600"/><path d="M7.800 12H9.700" stroke="#1b7fd3" stroke-width="1.400"/></svg>
<div class="t tr" style="left:82px;top:420px;font-size:12px !important">视图</div>
<svg class="abs" style="left:46px;top:441px" width="6" height="10" viewBox="0 0 6 10"><path d="M1 1L5 5 1 9" fill="none" stroke="#8e8e8e" stroke-width="1.500"/></svg>
<svg class="abs" style="left:60px;top:438px" width="16" height="16" viewBox="0 0 16 16"><path d="M1 14Q3.500 15 4.500 11L6.500 3.500Q7.500 .5 10.500 1.500M2 6.500H9" fill="none" stroke="#2b8be0" stroke-width="1.500" stroke-linecap="round"/><path d="M9.500 10L14.500 15M14.500 10L9.500 15" stroke="#2b8be0" stroke-width="1.500" stroke-linecap="round"/></svg>
<div class="t tr" style="left:82px;top:440px;font-size:12px !important">函数</div>
<svg class="abs" style="left:46px;top:461px" width="6" height="10" viewBox="0 0 6 10"><path d="M1 1L5 5 1 9" fill="none" stroke="#8e8e8e" stroke-width="1.500"/></svg>
<svg class="abs" style="left:60px;top:458px" width="16" height="16" viewBox="0 0 16 16"><rect x="6" y="0" width="10" height="9" rx="1.500" fill="#f6b5a6"/><rect x="6" y="0" width="10" height="3.200" rx="1.500" fill="#e4573d"/><rect x="0" y="6.500" width="10" height="9.500" rx="1.500" fill="#bcdcf7"/><rect x="0" y="6.500" width="10" height="3.200" rx="1.500" fill="#1f7fd0"/></svg>
<div class="t tr" style="left:82px;top:460px;font-size:12px !important">查询</div>
<svg class="abs" style="left:46px;top:481px" width="6" height="10" viewBox="0 0 6 10"><path d="M1 1L5 5 1 9" fill="none" stroke="#8e8e8e" stroke-width="1.500"/></svg>
<svg class="abs" style="left:60px;top:478px" width="14" height="16" viewBox="0 0 14 16"><rect x="1" y="0" width="12.500" height="16" rx="2" fill="#6f767c"/><rect x="1" y="12.500" width="12.500" height="3.500" rx="1.500" fill="#4d5359"/><path d="M10 6.500A2.800 2.800 0 1 1 8.800 4.200" fill="none" stroke="#e3e6e8" stroke-width="1.100"/><path d="M4.300 3.200V5.600H6.700" fill="none" stroke="#e3e6e8" stroke-width="1.100"/></svg>
<div class="t tr" style="left:82px;top:480px;font-size:12px !important">备份</div>
<div class="abs" style="left:0;top:618px;width:366px;height:1px;background:#ececec"></div>
<svg class="abs" style="left:6px;top:625px" width="15" height="15" viewBox="0 0 15 15"><circle cx="5.700" cy="5.700" r="4.300" fill="none" stroke="#2a84d8" stroke-width="1.900"/><path d="M9 9L13.500 13.500" stroke="#2a84d8" stroke-width="2.400" stroke-linecap="round"/></svg>
<div class="t tr" style="left:24px;top:626px">wm</div>
<svg class="abs" style="left:262px;top:627px" width="11" height="11" viewBox="0 0 11 11"><path d="M.5 .5L10.500 10.500M10.500 .5L.5 10.500" stroke="#555" stroke-width="1"/></svg>
<svg class="abs" style="left:282px;top:628px" width="14" height="10" viewBox="0 0 14 10"><path d="M0 .5H14M2.500 5H11.500M4.500 9.500H9.500" stroke="#777" stroke-width="1"/></svg>
<svg class="abs" style="left:306px;top:625px" width="15" height="14" viewBox="0 0 15 14"><path d="M7.500 .8L9.500 5 14.200 5.600 10.800 8.800 11.700 13.400 7.500 11.100 3.300 13.400 4.200 8.800.8 5.600 5.500 5Z" fill="none" stroke="#555" stroke-width="1" stroke-linejoin="round"/></svg>
<svg class="abs" style="left:330px;top:627px" width="13" height="12" viewBox="0 0 13 12"><path d="M1.500 .5L6.500 4 11.500 .5M1.500 11.500L6.500 8 11.500 11.500" fill="none" stroke="#555" stroke-width="1"/></svg>
<div class="abs" style="left:371px;top:107px;width:71px;height:24px;background:#f8f8f8;border-right:1px solid #e4e4e4;border-bottom:1px solid #e4e4e4"></div>
<div class="t" style="left:394px;top:113px;font-size:12px !important;color:#9a9a9a">对象</div>
<div class="abs" style="left:442px;top:107px;width:162px;height:25px;background:#f3f3f3"></div>
<svg class="abs" style="left:446px;top:110px" width="16" height="16" viewBox="0 0 16 16"><rect x="0" y="0" width="16" height="16" rx="2.500" fill="#c4e0fa"/><path d="M0 5H5.300V16H2.500Q0 16 0 13.500Z" fill="#d3e8fb"/><path d="M10.700 8.500H16V13.500Q16 16 13.500 16H10.700Z" fill="#a9d2f8"/><rect x="5.300" y="8.500" width="5.400" height="7.500" fill="#b6d9f9"/><path d="M0 2.500Q0 0 2.500 0H13.500Q16 0 16 2.500V5H0Z" fill="#1b7fd3"/><path d="M0 8.600H16M0 12.300H16M5.300 5V16M10.700 5V16" stroke="#dcedfc" stroke-width=".6"/></svg>
<div class="t tr" style="left:465px;top:112px">yisheng @springboot...</div>
<div class="abs" style="left:371px;top:132px;width:233px;height:516px;background:#fff"></div>
<div class="abs" style="left:371px;top:132px;width:233px;height:31px;background:#f3f3f3"></div><div class="abs" style="left:479px;top:139px;width:1px;height:21px;background:#e2e2e2"></div>
<svg class="abs" style="left:377px;top:141px" width="14" height="16" viewBox="0 0 14 16"><path d="M1 .5H9.500L13 4V15.500H1Z" fill="#fff" stroke="#999" stroke-width="1"/><rect x="3.500" y="6.500" width="7" height="7" rx="1" fill="none" stroke="#2a84d8" stroke-width="1.200"/><path d="M3.500 9H10.500M6 9V13.500M8.300 9V13.500" stroke="#2a84d8" stroke-width=".9"/></svg>
<div class="t" style="left:396px;top:144px;font-size:12px !important">表配置文件</div>
<svg class="abs" style="left:463px;top:148px" width="6" height="4" viewBox="0 0 6 4"><path d="M0 0H6L3 4Z" fill="#222"/></svg>
<div class="t" style="left:565px;top:135px;font-size:13px !important;font-weight:bold;letter-spacing:-1px">»</div>
<svg class="abs" style="left:566px;top:154px" width="6" height="4" viewBox="0 0 6 4"><path d="M0 0H6L3 4Z" fill="#222"/></svg>
<svg class="abs" style="left:584px;top:142px" width="15" height="15" viewBox="0 0 15 15"><path d="M.7 4.500V.7H4.500M10.500 .7H14.300V4.500M14.300 10.500V14.300H10.500M4.500 14.300H.7V10.500" fill="none" stroke="#2a84d8" stroke-width="1.400"/></svg>
<div class="abs" style="left:382px;top:163px;width:122px;height:45px;background:#b3d6f0;border-bottom:2px solid #7fb3dd"></div><div class="abs" style="left:382px;top:208px;width:122px;height:1px;background:#d4e8f8;z-index:2"></div>
<div class="t" style="left:388px;top:169px;font-size:13.500px !important;font-weight:bold;letter-spacing:.2px">id</div>
<svg class="abs" style="left:489px;top:172px" width="7" height="5" viewBox="0 0 7 5"><path d="M0 0H7L3.500 5Z" fill="#111"/></svg>
<svg class="abs" style="left:388px;top:188px" width="12" height="12" viewBox="0 0 12 12"><path d="M4.300 .5L2.500 11.500M9.300 .5L7.500 11.500M.8 3.800H11.500M.3 8.200H11" fill="none" stroke="#71859a" stroke-width="1"/></svg>
<div class="t" style="left:407px;top:187px;font-size:13px !important;color:#5f7f9c">bigint(20)</div>
<div class="t" style="left:510px;top:169px;font-size:13.500px !important;font-weight:bold;letter-spacing:.3px">addtime</div>
<svg class="abs" style="left:511px;top:189px" width="12" height="12" viewBox="0 0 12 12"><circle cx="6" cy="6" r="5.300" fill="none" stroke="#7b8ea0" stroke-width="1"/><path d="M6 3V6.300H8.500" fill="none" stroke="#7b8ea0" stroke-width="1"/></svg>
<div class="abs" style="left:529px;top:186px;width:53px;height:16px;overflow:hidden"><div class="t" style="left:0;top:1px;font-size:13px !important;color:#5b88b0">timestamp</div></div>
<div class="abs" style="left:371px;top:208px;width:216px;height:23px;background:#fff;border-bottom:1px solid #ececec"></div>
<div class="abs" style="left:371px;top:208px;width:11px;height:23px;background:#a9cdec"></div>
<div class="abs" style="left:383px;top:209px;width:121px;height:22px;background:#117dd3"></div>
<div class="abs" style="left:504px;top:208px;width:83px;height:23px;background:#cbe0f4"></div>
<div class="t" style="left:383px;top:214px;width:112px;text-align:right;font-size:12.500px !important;color:#fff">21</div>
<div class="abs" style="left:510px;top:208px;width:77px;height:22px;overflow:hidden"><div class="t" style="left:0;top:6px;font-size:12.700px !important">2025-05-06 1</div></div>
<div class="abs" style="left:371px;top:231px;width:216px;height:23px;background:#fff;border-bottom:1px solid #ececec"></div>
<div class="t" style="left:383px;top:237px;width:112px;text-align:right;font-size:12.500px !important;color:#111">22</div>
<div class="abs" style="left:510px;top:231px;width:77px;height:22px;overflow:hidden"><div class="t" style="left:0;top:6px;font-size:12.700px !important">2025-05-06 1</div></div>
<div class="abs" style="left:371px;top:254px;width:216px;height:23px;background:#f7f7f7;border-bottom:1px solid #ececec"></div>
<div class="t" style="left:383px;top:260px;width:112px;text-align:right;font-size:12.500px !important;color:#111">23</div>
<div class="abs" style="left:510px;top:254px;width:77px;height:22px;overflow:hidden"><div class="t" style="left:0;top:6px;font-size:12.700px !important">2025-05-06 1</div></div>
<div class="abs" style="left:371px;top:277px;width:216px;height:23px;background:#fff;border-bottom:1px solid #ececec"></div>
<div class="t" style="left:383px;top:283px;width:112px;text-align:right;font-size:12.500px !important;color:#111">24</div>
<div class="abs" style="left:510px;top:277px;width:77px;height:22px;overflow:hidden"><div class="t" style="left:0;top:6px;font-size:12.700px !important">2025-05-06 1</div></div>
<div class="abs" style="left:371px;top:300px;width:216px;height:23px;background:#fff;border-bottom:1px solid #ececec"></div>
<div class="t" style="left:383px;top:306px;width:112px;text-align:right;font-size:12.500px !important;color:#111">25</div>
<div class="abs" style="left:510px;top:300px;width:77px;height:22px;overflow:hidden"><div class="t" style="left:0;top:6px;font-size:12.700px !important">2025-05-06 1</div></div>
<div class="abs" style="left:371px;top:323px;width:216px;height:23px;background:#f3f8fd;border-bottom:1px solid #ececec"></div>
<div class="t" style="left:383px;top:329px;width:112px;text-align:right;font-size:12.500px !important;color:#111">26</div>
<div class="abs" style="left:510px;top:323px;width:77px;height:22px;overflow:hidden"><div class="t" style="left:0;top:6px;font-size:12.700px !important">2025-05-06 1</div></div>
<div class="abs" style="left:371px;top:346px;width:216px;height:23px;background:#fff;border-bottom:1px solid #ececec"></div>
<div class="t" style="left:383px;top:352px;width:112px;text-align:right;font-size:12.500px !important;color:#111">27</div>
<div class="abs" style="left:510px;top:346px;width:77px;height:22px;overflow:hidden"><div class="t" style="left:0;top:6px;font-size:12.700px !important">2025-05-06 1</div></div>
<div class="abs" style="left:371px;top:369px;width:216px;height:23px;background:#fff;border-bottom:1px solid #ececec"></div>
<div class="t" style="left:383px;top:375px;width:112px;text-align:right;font-size:12.500px !important;color:#111">28</div>
<div class="abs" style="left:510px;top:369px;width:77px;height:22px;overflow:hidden"><div class="t" style="left:0;top:6px;font-size:12.700px !important">2025-05-06 1</div></div>
<div class="abs" style="left:371px;top:392px;width:216px;height:23px;background:#fff;border-bottom:1px solid #ececec"></div>
<div class="t" style="left:383px;top:398px;width:112px;text-align:right;font-size:12.500px !important;color:#111">1746585726665</div>
<div class="abs" style="left:510px;top:392px;width:77px;height:22px;overflow:hidden"><div class="t" style="left:0;top:6px;font-size:12.700px !important">2025-05-07 1</div></div>
<div class="abs" style="left:382px;top:208px;width:1px;height:207px;background:#e4e4e4"></div>
<div class="abs" style="left:504px;top:231px;width:1px;height:184px;background:#ececec"></div>
<div class="abs" style="left:588px;top:163px;width:16px;height:446px;background:#f0f0f0"></div>
<div class="abs" style="left:588px;top:180px;width:15px;height:218px;background:#c9c9c9"></div>
<svg class="abs" style="left:592px;top:170px" width="8" height="5" viewBox="0 0 8 5"><path d="M.5 4.500L4 1 7.500 4.500" fill="none" stroke="#444" stroke-width="1.500"/></svg>
<svg class="abs" style="left:592px;top:598px" width="8" height="5" viewBox="0 0 8 5"><path d="M.5 .5L4 4 7.500 .5" fill="none" stroke="#444" stroke-width="1.500"/></svg>
<div class="abs" style="left:371px;top:609px;width:233px;height:17px;background:#f0f0f0"></div>
<div class="abs" style="left:388px;top:610px;width:26px;height:15px;background:#c9c9c9"></div>
<svg class="abs" style="left:376px;top:613px" width="5" height="8" viewBox="0 0 5 8"><path d="M4.500 .5L1 4 4.500 7.500" fill="none" stroke="#444" stroke-width="1.500"/></svg>
<svg class="abs" style="left:576px;top:613px" width="5" height="8" viewBox="0 0 5 8"><path d="M.5 .5L4 4 .5 7.500" fill="none" stroke="#444" stroke-width="1.500"/></svg>
<div class="abs" style="left:371px;top:626px;width:233px;height:22px;background:#f0f0f0"></div>
<svg class="abs" style="left:377px;top:632px" width="11" height="11" viewBox="0 0 11 11"><path d="M5.500 0V11M0 5.500H11" stroke="#333" stroke-width="1.600"/></svg>
<svg class="abs" style="left:401px;top:636px" width="11" height="2" viewBox="0 0 11 2"><path d="M0 1H11" stroke="#333" stroke-width="1.600"/></svg>
<svg class="abs" style="left:424px;top:632px" width="12" height="10" viewBox="0 0 12 10"><path d="M1 5.500L4.500 9 11 1" fill="none" stroke="#c4c4c4" stroke-width="1.800"/></svg>
<svg class="abs" style="left:450px;top:632px" width="10" height="10" viewBox="0 0 10 10"><path d="M1 1L9 9M9 1L1 9" stroke="#c4c4c4" stroke-width="1.800"/></svg>
<svg class="abs" style="left:473px;top:631px" width="12" height="12" viewBox="0 0 12 12"><path d="M10 6A4.200 4.200 0 1 1 8.500 2.700" fill="none" stroke="#444" stroke-width="1.800"/><path d="M7 0L11 2.200 7.800 5Z" fill="#444"/></svg>
<div class="abs" style="left:498px;top:632px;width:10px;height:10px;background:#c4c4c4"></div>
<div class="abs" style="left:550px;top:628px;width:1px;height:18px;background:#dadada"></div>
<div class="abs" style="left:557px;top:627px;width:23px;height:21px;background:#cce4f7;border:1px solid #a8d0f0"></div>
<svg class="abs" style="left:562px;top:631px" width="13" height="13" viewBox="0 0 13 13"><rect x=".5" y=".5" width="12" height="12" fill="#fff" stroke="#4a6a8a" stroke-width="1"/><path d="M.5 4.500H12.500M.5 8.500H12.500M4.500 .5V12.500M8.500 .5V12.500" stroke="#4a6a8a" stroke-width="1"/></svg>
<svg class="abs" style="left:585px;top:631px" width="14" height="13" viewBox="0 0 14 13"><rect x=".5" y=".5" width="13" height="12" rx="1" fill="#fff" stroke="#555" stroke-width="1"/><path d="M5.500 3.500H11.500M5.500 6.500H11.500M5.500 9.500H11.500" stroke="#555" stroke-width="1.100"/><path d="M2.500 3.500H3.800M2.500 6.500H3.800M2.500 9.500H3.800" stroke="#555" stroke-width="1.100"/></svg>
<div class="abs" style="left:606px;top:106px;width:354px;height:542px;background:#fff;overflow:hidden" id="info">
<svg class="abs" style="left:144px;top:4px" width="16" height="16" viewBox="0 0 16 16"><circle cx="8" cy="8" r="7" fill="none" stroke="#2a7fd6" stroke-width="1.600"/><path d="M8 7V11.500" stroke="#2a7fd6" stroke-width="1.700"/><circle cx="8" cy="4.700" r="1.050" fill="#2a7fd6"/></svg>
<svg class="abs" style="left:170px;top:6px" width="14" height="13" viewBox="0 0 14 13"><rect x=".5" y=".5" width="13" height="12" fill="#fff" stroke="#444" stroke-width="1"/><text x="7" y="8.700" font-size="5.500" font-weight="bold" text-anchor="middle" fill="#444" font-family="Liberation Sans,sans-serif">DDL</text></svg>
<svg class="abs" style="left:195px;top:6px" width="14" height="13" viewBox="0 0 14 13"><rect x=".5" y=".5" width="13" height="12" fill="#fff" stroke="#444" stroke-width="1"/><path d="M5 .5V12.500M9 .5V12.500" stroke="#444" stroke-width="1"/><rect x="5" y=".5" width="4" height="12" fill="#444"/><path d="M.5 4.500H5M.5 8.500H5M9 4.500H13.500M9 8.500H13.500" stroke="#444" stroke-width="1"/></svg>
<svg class="abs" style="left:15px;top:39px" width="52" height="50" viewBox="0 0 52 51" preserveAspectRatio="none"><defs><linearGradient id="bg1" x1="0" y1="0" x2="1" y2="0"><stop offset="0" stop-color="#2a8fdc"/><stop offset="1" stop-color="#0f78cc"/></linearGradient></defs><rect width="52" height="51" rx="5" fill="#cfe6fb"/><path d="M0 5Q0 0 5 0H47Q52 0 52 5V14H0Z" fill="url(#bg1)"/><rect x="0" y="14" width="17" height="12" fill="#e0effc"/><rect x="17" y="14" width="18" height="12" fill="#d2e7fb"/><rect x="35" y="14" width="17" height="12" fill="#b9dbf9"/><rect x="0" y="26" width="17" height="12" fill="#cfe6fb"/><rect x="17" y="26" width="18" height="12" fill="#9dccf6"/><rect x="35" y="26" width="17" height="12" fill="#a6d1f7"/><path d="M0 38H17V51H5Q0 51 0 46Z" fill="#b5d9f8"/><rect x="17" y="38" width="18" height="13" fill="#a6d1f7"/><path d="M35 38H52V46Q52 51 47 51H35Z" fill="#8cc3f4"/></svg>
<div class="t" style="left:81px;top:38px;font-size:14.300px !important;font-weight:bold;color:#333">yisheng</div>
<div class="t" style="left:81px;top:59px;font-size:12.500px !important;color:#8a8a8a">表</div>
<svg class="abs" style="left:82px;top:77px" width="15" height="14" viewBox="0 0 15 14"><path d="M4.500 2.500H.7V13.300H12.300V10" fill="none" stroke="#7a7a7a" stroke-width="1.100"/><path d="M4.500 10Q5 4.500 13 4.200M10 .8L13.500 4.200 10 7.600" fill="none" stroke="#2a7fd6" stroke-width="1.100"/></svg>
<div class="t" style="left:101px;top:79px;font-size:12.500px !important;color:#2a7fd6">共享</div>
<svg class="abs" style="left:17px;top:114px" width="15" height="14" viewBox="0 0 15 14"><path d="M1 1.800Q3.500 .3 5.500 2.800 9.500 3.300 10.800 7.300 11.300 9.800 14 11.300 12.500 13 10.300 11.800 6.800 12.800 5.300 9.800 3.300 9.300 3.300 6.300 3 3.800 1 1.800Z" fill="none" stroke="#8a8a8a" stroke-width="1" stroke-linejoin="round"/></svg>
<div class="t" style="left:41px;top:115px;font-size:13px !important;color:#444">localhost</div>
<svg class="abs" style="left:18px;top:135px" width="13" height="14" viewBox="0 0 13 14"><ellipse cx="6.500" cy="2.800" rx="5.800" ry="2.300" fill="none" stroke="#888" stroke-width="1"/><path d="M.7 2.800V11.200Q.7 13.500 6.500 13.500 12.300 13.500 12.300 11.200V2.800M.7 5.600Q.7 7.900 6.500 7.900 12.300 7.900 12.300 5.600M.7 8.400Q.7 10.700 6.500 10.700 12.300 10.700 12.300 8.400" fill="none" stroke="#888" stroke-width="1"/></svg>
<div class="t" style="left:41px;top:135px;font-size:13.200px !important;color:#444">springboot48u6wm15</div>
<div class="t" style="left:17px;top:172px;font-size:13.800px !important;color:#6e6e6e">行</div>
<div class="t" style="left:17px;top:192px;font-size:12.500px !important;color:#444">8</div>
<div class="t" style="left:17px;top:223px;font-size:13.800px !important;color:#6e6e6e">引擎</div>
<div class="t" style="left:17px;top:243px;font-size:12.500px !important;color:#444">InnoDB</div>
<div class="t" style="left:17px;top:274px;font-size:13.800px !important;color:#6e6e6e">自动递增</div>
<div class="t" style="left:17px;top:294px;font-size:12.500px !important;color:#444">29</div>
<div class="t" style="left:17px;top:325px;font-size:13.800px !important;color:#6e6e6e">行格式</div>
<div class="t" style="left:17px;top:345px;font-size:12.500px !important;color:#444">Dynamic</div>
<div class="t" style="left:17px;top:376px;font-size:13.800px !important;color:#6e6e6e">修改日期</div>
<div class="t" style="left:17px;top:396px;font-size:12.500px !important;color:#444">2025-05-07 10:37:46</div>
<div class="t" style="left:17px;top:427px;font-size:13.800px !important;color:#6e6e6e">创建日期</div>
<div class="t" style="left:17px;top:447px;font-size:12.500px !important;color:#444">2025-05-07 10:37:46</div>
<div class="t" style="left:17px;top:478px;font-size:13.800px !important;color:#6e6e6e">检查时间</div>
<div class="t" style="left:17px;top:498px;font-size:12.500px !important;color:#444">--</div>
<div class="t" style="left:17px;top:529px;font-size:13.800px !important;color:#6e6e6e">索引长度</div>
<div class="abs" style="left:337px;top:26px;width:16px;height:516px;background:#f0f0f0"></div>
<div class="abs" style="left:338px;top:43px;width:14px;height:291px;background:#c9c9c9"></div>
<svg class="abs" style="left:341px;top:32px" width="8" height="5" viewBox="0 0 8 5"><path d="M.5 4.500L4 1 7.500 4.500" fill="none" stroke="#444" stroke-width="1.500"/></svg>
<svg class="abs" style="left:341px;top:531px" width="8" height="5" viewBox="0 0 8 5"><path d="M.5 .5L4 4 7.500 .5" fill="none" stroke="#444" stroke-width="1.500"/></svg>
</div>
<div class="abs" style="left:376px;top:650px;width:207px;height:20px;overflow:hidden"><div class="t" style="left:0;top:3px;font-size:13px !important">SELECT * FROM `springboot48u6wm15`.`yisheng`</div></div>
<div class="abs" style="left:586px;top:651px;width:1px;height:17px;background:#d6d6d6"></div>
<div class="abs" style="left:655px;top:651px;width:1px;height:17px;background:#d6d6d6"></div>
<div class="t" style="left:659px;top:653px;font-size:12.800px !important;letter-spacing:.25px">第 1 条记录 (共 9 条) 于第 1 页</div>
<div class="abs" style="left:909px;top:649px;width:23px;height:20px;background:#c9e3f8;border:1px solid #b4d6f2"></div>
<div class="abs" style="left:932px;top:649px;width:23px;height:20px;background:#c9e3f8;border:1px solid #b4d6f2"></div>
<svg class="abs" style="left:916px;top:654px" width="12" height="12" viewBox="0 0 12 12"><rect x=".5" y=".5" width="11" height="11" fill="none" stroke="#47525c" stroke-width="1"/><rect x="2.500" y="2.500" width="2.500" height="7" fill="#47525c"/></svg>
<svg class="abs" style="left:939px;top:654px" width="12" height="12" viewBox="0 0 12 12"><rect x=".5" y=".5" width="11" height="11" fill="none" stroke="#47525c" stroke-width="1"/><rect x="7" y="2.500" width="2.500" height="7" fill="#47525c"/></svg>
</div>


<!-- ================= TASKBAR ================= -->
<div id="task" class="abs">
  <!-- start -->
  <svg class="abs" style="left:16px;top:12px" width="16" height="16" viewBox="0 0 16 16"><path d="M0 2.200L6.600 1.300V7.600H0ZM7.400 1.200L16 0V7.600H7.400ZM0 8.400H6.600V14.700L0 13.800ZM7.400 8.400H16V16L7.400 14.800Z" fill="#111"/></svg>
  <!-- search box -->
  <div class="abs" style="left:48px;top:0;width:288px;height:40px;background:#fff;border:1px solid #d2d2d2;border-bottom:none"></div>
  <svg class="abs" style="left:60px;top:12px" width="17" height="17" viewBox="0 0 17 17"><circle cx="10.500" cy="6.500" r="5.200" fill="none" stroke="#222" stroke-width="1.500"/><path d="M6.800 10.200L.8 16.200" stroke="#222" stroke-width="1.600" stroke-linecap="round"/></svg>
  <div class="t" style="left:87px;top:14px;font-size:14.500px;color:#333">搜索</div>
  <!-- task view -->
  <svg class="abs" style="left:351px;top:12px" width="18" height="16" viewBox="0 0 18 16"><rect x="3" y="4" width="9" height="8" fill="none" stroke="#111" stroke-width="1.500"/><path d="M1 1.200H12.500M1 14.800H12.500" stroke="#111" stroke-width="1.500"/><path d="M15.500 1V3.500M15.500 6V10M15.500 12.500V15" stroke="#111" stroke-width="1.800"/></svg>
  <!-- edge -->
  <svg class="abs" style="left:398px;top:7px" width="26" height="26" viewBox="0 0 26 26"><defs><linearGradient id="eg1" x1="0" y1="0" x2="1" y2="1"><stop offset="0" stop-color="#35c1f1"/><stop offset="1" stop-color="#0c59a4"/></linearGradient><linearGradient id="eg2" x1="0" y1="1" x2="1" y2="0"><stop offset="0" stop-color="#2b9ee0"/><stop offset="1" stop-color="#6ed857"/></linearGradient></defs><circle cx="13" cy="13" r="12.500" fill="url(#eg1)"/><path d="M.7 11.500Q2 1 13 .5 24 1 25.300 11Q25.500 15.500 21 16.500 16 17 15.500 14.500 17 13 16.500 11 15.500 7.500 11 7.500 4 8 .7 11.500Z" fill="url(#eg2)"/><path d="M9.500 11.500Q6.500 15 8.500 19.500 11 24.500 17 24 21 23.500 23.500 20 18 23 14 19.500 11.500 16.500 13 13.500 12 11 9.500 11.500Z" fill="#0a4f96" opacity=".85"/><path d="M11 7.500Q15.500 7.500 16.500 11 17 13 15.500 14.500 13.500 12 10.500 12 7 12.500 6 15.500 5.500 10 11 7.500Z" fill="#eaf6fd"/></svg>
  <!-- explorer -->
  <svg class="abs" style="left:448px;top:8px" width="25" height="23" viewBox="0 0 25 23"><path d="M1 3Q1 1.500 2.500 1.500H8.500L10.500 4H22Q23.500 4 23.500 5.500V8H1Z" fill="#e9a825"/><rect x="1" y="6" width="23" height="15" rx="1.500" fill="#fbd665"/><path d="M5 13H20V21H5Z" fill="#3f9be0"/><path d="M9 17H16V21H9Z" fill="#fbd665"/><path d="M5 13H20V15H5Z" fill="#2f86cf"/></svg>
  <!-- chrome -->
  <svg class="abs" style="left:496px;top:7px" width="26" height="26" viewBox="0 0 26 26"><circle cx="13" cy="13" r="12.500" fill="#fff"/><path d="M13 .5A12.500 12.500 0 0 1 23.800 6.800H13A6.200 6.200 0 0 0 7.600 10L2.200 6.800A12.500 12.500 0 0 1 13 .5Z" fill="#e33b2e"/><path d="M23.800 6.800A12.500 12.500 0 0 1 12.400 25.500L17.800 16.200A6.200 6.200 0 0 0 18.400 9.900 6.200 6.200 0 0 0 13 6.800Z" fill="#fbc116"/><path d="M12.400 25.500A12.500 12.500 0 0 1 2.200 6.800L7.600 16.100A6.200 6.200 0 0 0 17.800 16.200Z" fill="#2ba24c"/><circle cx="13" cy="13" r="5.600" fill="#fff"/><circle cx="13" cy="13" r="4.500" fill="#3f7fe8"/></svg>
  <!-- wps -->
  <svg class="abs" style="left:545px;top:10px" width="26" height="20" viewBox="0 0 26 20"><path d="M1 3H6L9 13 12.500 3H15L18.500 13 20 8H16.500L17.500 4H25L21.500 17H17L14 8.500 10.500 17H6.500Z" fill="#e3222b"/><path d="M6 3L9 13 10.500 9 8.500 3Z" fill="#fff" opacity=".25"/></svg>
  <!-- wechat (highlight) -->
  <div class="abs" style="left:583px;top:0;width:48px;height:40px;background:#f3c29f"></div>
  <div class="abs" style="left:630px;top:0;width:1px;height:40px;background:#e8a57c"></div>
  <svg class="abs" style="left:594px;top:8px" width="26" height="23" viewBox="0 0 26 23"><ellipse cx="9.500" cy="8" rx="9" ry="7.500" fill="#3ddc5a"/><path d="M4 13.500L3 17.500 8 15Z" fill="#3ddc5a"/><circle cx="6.500" cy="6" r="1.100" fill="#1c8a33"/><circle cx="12.500" cy="6" r="1.100" fill="#1c8a33"/><ellipse cx="18" cy="15" rx="7.500" ry="6.300" fill="#ededed"/><path d="M21.500 19.500L23 22.500 18.500 21Z" fill="#ededed"/><circle cx="15.500" cy="13.500" r=".9" fill="#9a9a9a"/><circle cx="20.500" cy="13.500" r=".9" fill="#9a9a9a"/></svg>
  <!-- bolt -->
  <svg class="abs" style="left:644px;top:8px" width="24" height="24" viewBox="0 0 24 24"><circle cx="12" cy="12" r="11.500" fill="#1d7fd6"/><circle cx="12" cy="12" r="9" fill="#1467b8"/><path d="M13.500 4L7 13H11.500L10 20 17 10.500H12.500Z" fill="#fff"/></svg>
  <!-- P -->
  <svg class="abs" style="left:693px;top:8px" width="24" height="24" viewBox="0 0 24 24"><rect width="24" height="24" rx="2.500" fill="#2193dd"/><text x="12" y="19.500" font-size="19" font-weight="bold" text-anchor="middle" fill="#fff" font-family="Liberation Sans,sans-serif">P</text></svg>
  <!-- navicat (active) -->
  <div class="abs" style="left:730px;top:0;width:48px;height:40px;background:#e9f2f6"></div>
  <svg class="abs" style="left:742px;top:8px" width="25" height="24" viewBox="0 0 25 24"><ellipse cx="12.500" cy="15" rx="10" ry="7.600" fill="none" stroke="#e2c45a" stroke-width="2.600"/><path d="M5.500 10Q3 4.500 6.500 2.200 10 1.200 11.500 7.500" fill="none" stroke="#e2c45a" stroke-width="2.200" stroke-linecap="round"/><path d="M19.500 10Q22 4.500 18.500 2.200 15 1.200 13.500 7.500" fill="none" stroke="#e2c45a" stroke-width="2.200" stroke-linecap="round"/><ellipse cx="12.500" cy="15" rx="8.300" ry="5.900" fill="none" stroke="#f4e7a8" stroke-width=".9"/></svg>
  <!-- IJ -->
  <svg class="abs" style="left:789px;top:6px" width="28" height="28" viewBox="0 0 28 28"><path d="M0 9L8 0 19 3 13 15Z" fill="#fc3d6e"/><path d="M19 3L28 10 24 20 13 15Z" fill="#f97a12"/><path d="M24 20L15 28 5 22 13 15Z" fill="#087cfa"/><path d="M0 9L5 22 13 15Z" fill="#c24af7"/><path d="M24 20L28 10 22 24Z" fill="#21d789"/><rect x="6" y="6" width="16" height="16" fill="#111"/><text x="8" y="14.500" font-size="8" font-weight="bold" fill="#fff" font-family="Liberation Sans,sans-serif">IJ</text><rect x="8" y="18" width="6" height="1.500" fill="#fff"/></svg>
  <!-- chat bubble terminal -->
  <svg class="abs" style="left:839px;top:8px" width="27" height="25" viewBox="0 0 27 25"><ellipse cx="13.500" cy="11" rx="13" ry="10.500" fill="#eef1f0"/><path d="M18 19.500L21.500 24 12 21Z" fill="#eef1f0"/><path d="M8.500 7.500L11.500 9.500 8.500 11.500" fill="none" stroke="#35b558" stroke-width="1.400"/><rect x="12" y="13" width="4" height="1.400" fill="#35b558"/><circle cx="18" cy="9.500" r="1.200" fill="#35b558"/></svg>
  <!-- underline bars -->
  <div class="bar" style="left:391px;width:40px"></div>
  <div class="bar" style="left:440px;width:36px"></div><div class="bar" style="left:476px;width:4px;background:#7ab3dd"></div>
  <div class="bar" style="left:489px;width:40px"></div>
  <div class="bar" style="left:538px;width:32px"></div><div class="bar" style="left:570px;width:8px;background:#7ab3dd"></div>
  <div class="bar" style="left:583px;width:48px;background:#f16a00"></div>
  <div class="bar" style="left:636px;width:40px"></div>
  <div class="bar" style="left:685px;width:40px"></div>
  <div class="bar" style="left:730px;width:48px"></div>
  <div class="bar" style="left:783px;width:40px"></div>
  <div class="bar" style="left:832px;width:40px"></div>
  <!-- tray -->
  <svg class="abs" style="left:1529px;top:12px" width="24" height="17" viewBox="0 0 24 17"><rect x="1" y="1" width="22" height="15" rx="2" fill="none" stroke="#111" stroke-width="1.700"/><rect x="4.500" y="6.500" width="7" height="6" fill="none" stroke="#111" stroke-width="1.500"/><path d="M4 4H20M14 7.500H20M14 10H20M14 12.500H20" stroke="#111" stroke-width="1.300"/></svg>
  <div class="t" style="left:1561px;top:13px;font-size:14.500px;color:#111">22°C</div>
  <div class="t" style="left:1601px;top:13px;font-size:13.800px;color:#111">大部晴朗</div>
  <svg class="abs" style="left:1682px;top:16px" width="12" height="7" viewBox="0 0 12 7"><path d="M.7 6.300L6 1 11.300 6.300" fill="none" stroke="#111" stroke-width="1.300"/></svg>
  <svg class="abs" style="left:1706px;top:13px" width="14" height="14" viewBox="0 0 14 14"><path d="M1.500 13A11.500 11.500 0 0 1 13 1.500M4.500 13A8.500 8.500 0 0 1 13 4.500M7.500 13A5.500 5.500 0 0 1 13 7.500" fill="none" stroke="#333" stroke-width="1.100"/><circle cx="11.800" cy="11.800" r="1.600" fill="#111"/></svg>
  <svg class="abs" style="left:1727px;top:14px" width="18" height="12" viewBox="0 0 18 12"><rect x="5" y="3" width="11.500" height="7.500" fill="#111"/><rect x="6.200" y="4.200" width="9" height="5" fill="none" stroke="#dde6ee" stroke-width=".8"/><rect x="16.500" y="5.300" width="1.300" height="3" fill="#111"/><path d="M2.500 .5V3M4.500 .5V3M1.500 3H5.500V5.500Q3.500 7.500 1.500 5.500Z" fill="none" stroke="#111" stroke-width="1"/></svg>
  <svg class="abs" style="left:1751px;top:13px" width="17" height="14" viewBox="0 0 17 14"><path d="M.7 4.700H3.500L7.500 1.200V12.800L3.500 9.300H.7Z" fill="none" stroke="#111" stroke-width="1.200" stroke-linejoin="round"/><path d="M9.800 4.500Q11 7 9.800 9.500M12 2.800Q14.300 7 12 11.200" fill="none" stroke="#111" stroke-width="1.100"/><path d="M14.300 1.300Q17.300 7 14.300 12.700" fill="none" stroke="#999" stroke-width="1"/></svg>
  <div class="t" style="left:1774px;top:12px;font-size:15.500px;color:#111">英</div>
  <div class="t" style="left:1801px;top:5px;width:60px;text-align:center;font-size:12.500px;color:#111">10:42</div>
  <div class="t" style="left:1796px;top:23px;width:70px;text-align:center;font-size:12.500px;color:#111">2025/5/7</div>
  <svg class="abs" style="left:1879px;top:11px" width="18" height="17" viewBox="0 0 18 17"><path d="M.5 .5H16.500V12.500H7L3 16.500V12.500H.5Z" fill="#111"/><path d="M3 3.500H14M3 6.300H14M3 9.100H14" stroke="#dfe6ee" stroke-width="1.100"/></svg>
  <div class="abs" style="left:1886px;top:19px;width:16px;height:16px;border-radius:8px;background:#e2e6ea;border:1px solid #8a8f94"></div>
  <div class="t" style="left:1886px;top:22px;width:16px;text-align:center;font-size:10.500px;font-weight:bold;color:#111">1</div>
  <div class="abs" style="left:1915px;top:0;width:1px;height:40px;background:#b9c2cb"></div>

</div>

<!-- timer bubble -->
<div class="abs" style="left:1787px;top:995px;width:49px;height:49px;border-radius:25px;background:#fff;box-shadow:0 0 4px rgba(0,0,0,.18)"></div>
<div class="abs" style="left:1789px;top:997px;width:45px;height:45px;border-radius:23px;background:linear-gradient(45deg,#56b2f8 0%,#3a8af2 55%,#3576ee 100%)"></div>
<svg class="abs" style="left:1789px;top:997px" width="45" height="45" viewBox="0 0 45 45"><path d="M27 5.500Q33 7.500 36 12" fill="none" stroke="#bfe0ff" stroke-width="1" opacity=".8"/><path d="M24 40.500Q31 39.500 35 35" fill="none" stroke="#9fd2ff" stroke-width=".8" opacity=".6"/></svg><div class="t" style="left:1789px;top:1013px;width:45px;text-align:center;font-size:14.500px;color:#f4fbff">01:44</div>
<!-- mouse cursor -->
<svg class="abs" style="left:1120px;top:404px" width="13" height="20" viewBox="0 0 13 20"><path d="M.7 .8V16.200L4.300 12.800 7 19 9.400 18 6.700 11.900H11.700Z" fill="#fff" stroke="#111" stroke-width="1.100" stroke-linejoin="round"/></svg>

</div>
</body>
</html>
